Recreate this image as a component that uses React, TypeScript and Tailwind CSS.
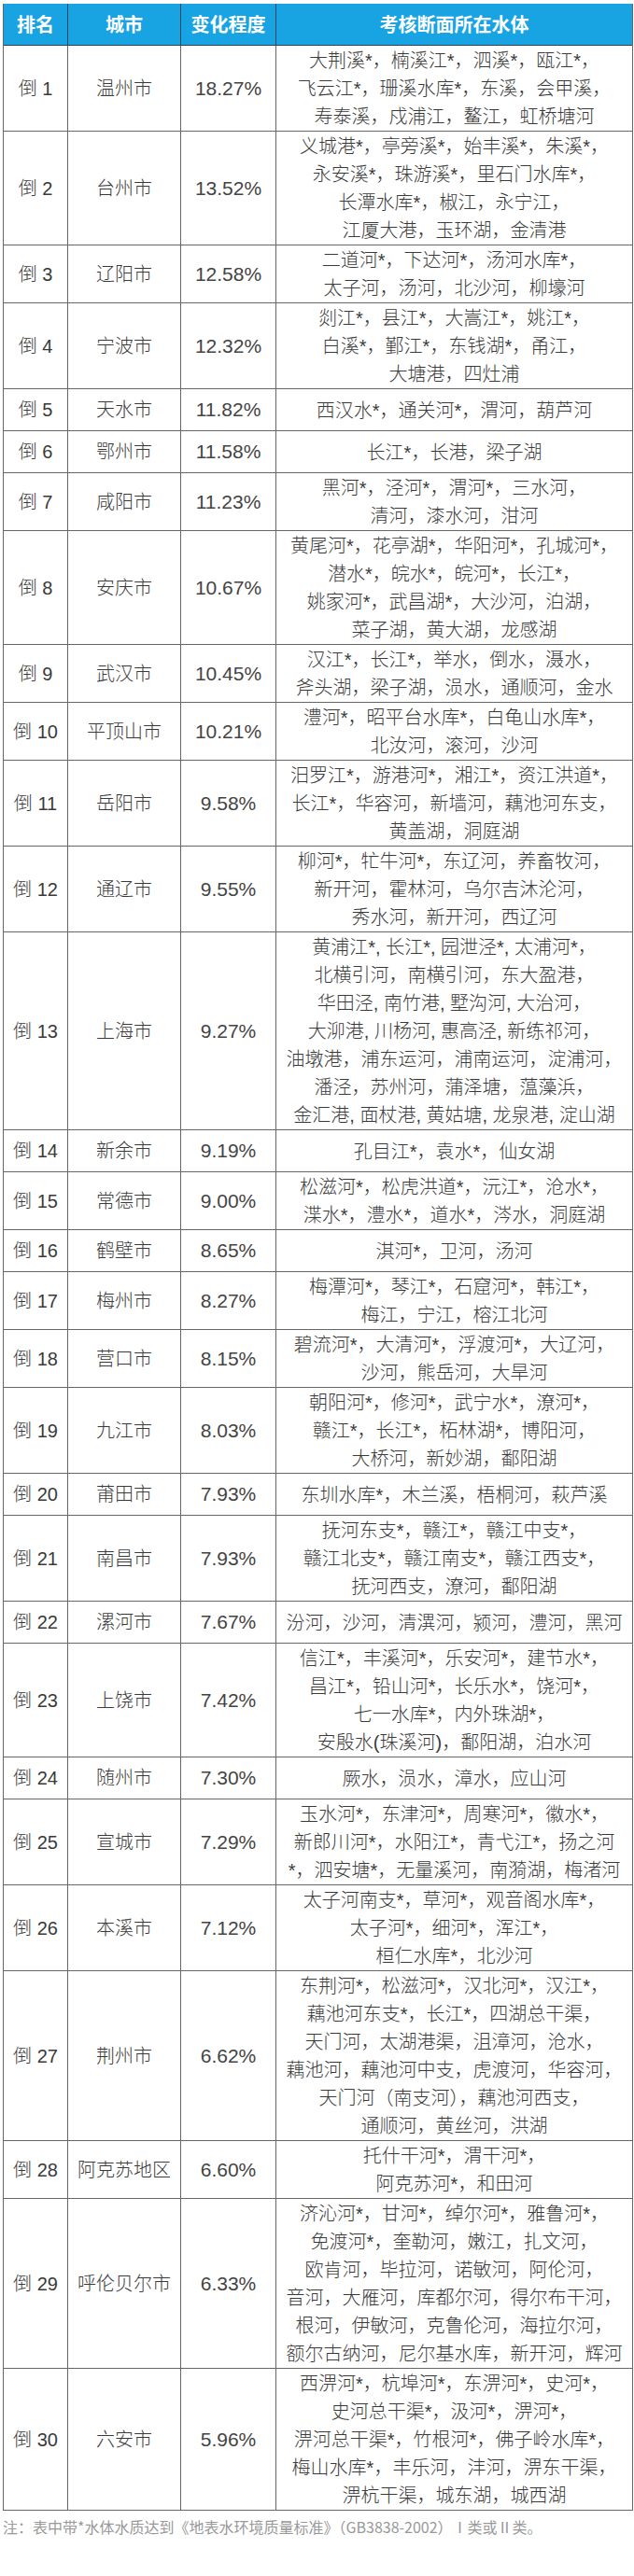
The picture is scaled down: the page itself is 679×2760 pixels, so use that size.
import React from 'react';

type Row = [string, string, string, string[]];

// 变化程度排名（后 30 位）
const rows: Row[] = [
  ['倒 1', '温州市', '18.27%', ['大荆溪*，楠溪江*，泗溪*，瓯江*，', '飞云江*，珊溪水库*，东溪，会甲溪，', '寿泰溪，戍浦江，鳌江，虹桥塘河']],
  ['倒 2', '台州市', '13.52%', ['义城港*，亭旁溪*，始丰溪*，朱溪*，', '永安溪*，珠游溪*，里石门水库*，', '长潭水库*，椒江，永宁江，', '江厦大港，玉环湖，金清港']],
  ['倒 3', '辽阳市', '12.58%', ['二道河*，下达河*，汤河水库*，', '太子河，汤河，北沙河，柳壕河']],
  ['倒 4', '宁波市', '12.32%', ['剡江*，县江*，大嵩江*，姚江*，', '白溪*，鄞江*，东钱湖*，甬江，', '大塘港，四灶浦']],
  ['倒 5', '天水市', '11.82%', ['西汉水*，通关河*，渭河，葫芦河']],
  ['倒 6', '鄂州市', '11.58%', ['长江*，长港，梁子湖']],
  ['倒 7', '咸阳市', '11.23%', ['黑河*，泾河*，渭河*，三水河，', '清河，漆水河，泔河']],
  ['倒 8', '安庆市', '10.67%', ['黄尾河*，花亭湖*，华阳河*，孔城河*，', '潜水*，皖水*，皖河*，长江*，', '姚家河*，武昌湖*，大沙河，泊湖，', '菜子湖，黄大湖，龙感湖']],
  ['倒 9', '武汉市', '10.45%', ['汉江*，长江*，举水，倒水，滠水，', '斧头湖，梁子湖，涢水，通顺河，金水']],
  ['倒 10', '平顶山市', '10.21%', ['澧河*，昭平台水库*，白龟山水库*，', '北汝河，滚河，沙河']],
  ['倒 11', '岳阳市', '9.58%', ['汨罗江*，游港河*，湘江*，资江洪道*，', '长江*，华容河，新墙河，藕池河东支，', '黄盖湖，洞庭湖']],
  ['倒 12', '通辽市', '9.55%', ['柳河*，牤牛河*，东辽河，养畜牧河，', '新开河，霍林河，乌尔吉沐沦河，', '秀水河，新开河，西辽河']],
  ['倒 13', '上海市', '9.27%', ['黄浦江*, 长江*, 园泄泾*, 太浦河*，', '北横引河，南横引河，东大盈港，', '华田泾, 南竹港, 墅沟河, 大治河，', '大泖港, 川杨河, 惠高泾, 新练祁河，', '油墩港，浦东运河，浦南运河，淀浦河，', '潘泾，苏州河，蒲泽塘，蕰藻浜，', '金汇港, 面杖港, 黄姑塘, 龙泉港, 淀山湖']],
  ['倒 14', '新余市', '9.19%', ['孔目江*，袁水*，仙女湖']],
  ['倒 15', '常德市', '9.00%', ['松滋河*，松虎洪道*，沅江*，沧水*，', '渫水*，澧水*，道水*，涔水，洞庭湖']],
  ['倒 16', '鹤壁市', '8.65%', ['淇河*，卫河，汤河']],
  ['倒 17', '梅州市', '8.27%', ['梅潭河*，琴江*，石窟河*，韩江*，', '梅江，宁江，榕江北河']],
  ['倒 18', '营口市', '8.15%', ['碧流河*，大清河*，浮渡河*，大辽河，', '沙河，熊岳河，大旱河']],
  ['倒 19', '九江市', '8.03%', ['朝阳河*，修河*，武宁水*，潦河*，', '赣江*，长江*，柘林湖*，博阳河，', '大桥河，新妙湖，鄱阳湖']],
  ['倒 20', '莆田市', '7.93%', ['东圳水库*，木兰溪，梧桐河，萩芦溪']],
  ['倒 21', '南昌市', '7.93%', ['抚河东支*，赣江*，赣江中支*，', '赣江北支*，赣江南支*，赣江西支*，', '抚河西支，潦河，鄱阳湖']],
  ['倒 22', '漯河市', '7.67%', ['汾河，沙河，清潩河，颍河，澧河，黑河']],
  ['倒 23', '上饶市', '7.42%', ['信江*，丰溪河*，乐安河*，建节水*，', '昌江*，铅山河*，长乐水*，饶河*，', '七一水库*，内外珠湖*，', '安殷水(珠溪河)，鄱阳湖，泊水河']],
  ['倒 24', '随州市', '7.30%', ['厥水，涢水，漳水，应山河']],
  ['倒 25', '宣城市', '7.29%', ['玉水河*，东津河*，周寒河*，徽水*，', '新郎川河*，水阳江*，青弋江*，扬之河', '*，泗安塘*，无量溪河，南漪湖，梅渚河']],
  ['倒 26', '本溪市', '7.12%', ['太子河南支*，草河*，观音阁水库*，', '太子河*，细河*，浑江*，', '桓仁水库*，北沙河']],
  ['倒 27', '荆州市', '6.62%', ['东荆河*，松滋河*，汉北河*，汉江*，', '藕池河东支*，长江*，四湖总干渠，', '天门河，太湖港渠，沮漳河，沧水，', '藕池河，藕池河中支，虎渡河，华容河，', '天门河（南支河），藕池河西支，', '通顺河，黄丝河，洪湖']],
  ['倒 28', '阿克苏地区', '6.60%', ['托什干河*，渭干河*，', '阿克苏河*，和田河']],
  ['倒 29', '呼伦贝尔市', '6.33%', ['济沁河*，甘河*，绰尔河*，雅鲁河*，', '免渡河*，奎勒河，嫩江，扎文河，', '欧肯河，毕拉河，诺敏河，阿伦河，', '音河，大雁河，库都尔河，得尔布干河，', '根河，伊敏河，克鲁伦河，海拉尔河，', '额尔古纳河，尼尔基水库，新开河，辉河']],
  ['倒 30', '六安市', '5.96%', ['西淠河*，杭埠河*，东淠河*，史河*，', '史河总干渠*，汲河*，淠河*，', '淠河总干渠*，竹根河*，佛子岭水库*，', '梅山水库*，丰乐河，沣河，淠东干渠，', '淠杭干渠，城东湖，城西湖']],
];

export default function App() {
  return (
    <main className="min-h-[2760px] bg-white pt-[4px] font-['Liberation_Sans','Noto_Sans_CJK_SC',sans-serif]">
      <div className="ml-[3px] w-[675px] border-x border-[#666]">
        {/* Header */}
        <div className="flex h-[45px] bg-[#18a3e3] border-b border-[#2e4358] text-[20px] font-bold text-white font-['Noto_Sans_CJK_SC',sans-serif]">
          <div className="w-[69px] shrink-0 flex items-center justify-center border-r border-[#2e4358]">排名</div>
          <div className="w-[121px] shrink-0 flex items-center justify-center border-r border-[#2e4358]">城市</div>
          <div className="w-[102px] shrink-0 flex items-center justify-center border-r border-[#2e4358]">变化程度</div>
          <div className="flex-1 flex items-center justify-center">考核断面所在水体</div>
        </div>

        {/* Body */}
        {rows.map(([rank, city, pct, waters]) => (
          <div
            key={rank}
            className={`flex border-b border-[#666] font-light text-[#3a3a3a] ${waters.length === 1 ? 'min-h-[45px]' : ''}`}
          >
            <div className="w-[69px] shrink-0 flex items-center justify-center border-r border-[#666] text-[20px]">{rank}</div>
            <div className="w-[121px] shrink-0 flex items-center justify-center border-r border-[#666] text-[20px]">{city}</div>
            <div className="w-[102px] shrink-0 flex items-center justify-center border-r border-[#666] text-[21px] text-[#444]">{pct}</div>
            <div className="flex-1 min-w-0 flex flex-col justify-center pt-px text-center text-[20px] leading-[30px]">
              {waters.map(line => (
                <div key={line} className="whitespace-nowrap">{line}</div>
              ))}
            </div>
          </div>
        ))}
      </div>

      <p className="mt-[5px] ml-[3px] text-[16px] leading-[24px] text-[#999] font-['Noto_Sans_CJK_SC',sans-serif]">
        注：表中带*水体水质达到《地表水环境质量标准》（GB3838-2002）Ⅰ类或Ⅱ类。
      </p>
    </main>
  );
}
